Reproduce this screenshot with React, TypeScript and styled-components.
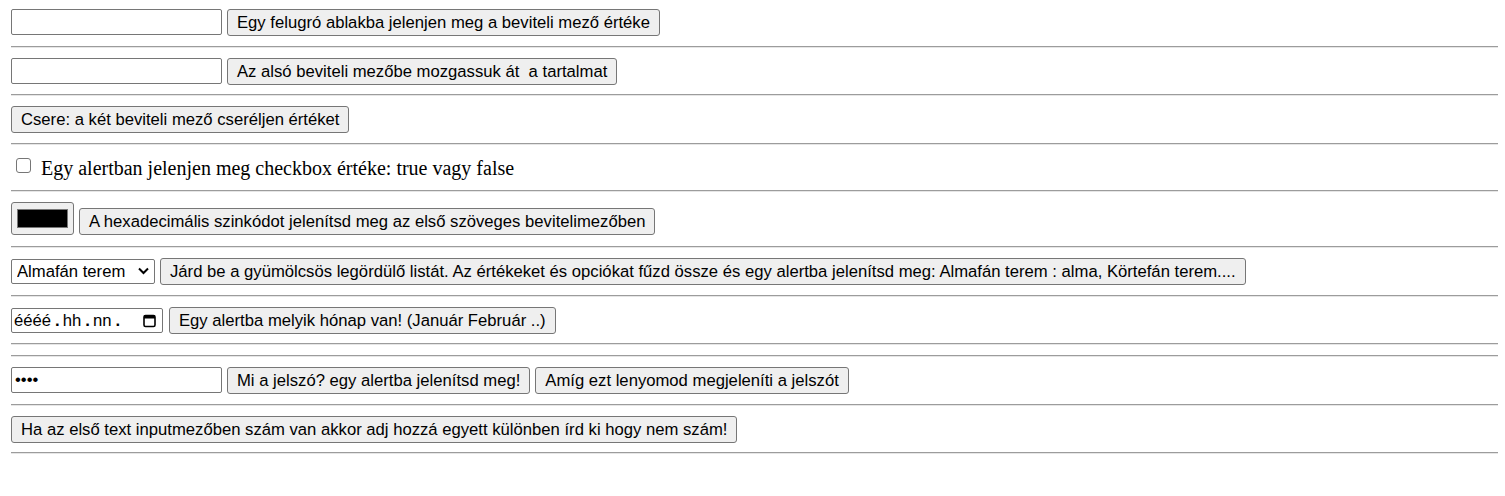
import React from "react";
import styled, { createGlobalStyle } from "styled-components";

const Global = createGlobalStyle`
  html, body { margin: 0; padding: 0; background: #ffffff; }
  body { font-family: "Liberation Serif", "Times New Roman", serif; color: #000; }
  * { box-sizing: border-box; }
`;

const Page = styled.div`
  padding: 0 7px 0 11px;
  display: flex;
  flex-direction: column;
`;

const Row = styled.div<{ $h: number; $pt: number; $gap?: number; $align?: string }>`
  height: ${(p) => p.$h}px;
  padding-top: ${(p) => p.$pt}px;
  display: flex;
  align-items: ${(p) => p.$align || "center"};
  gap: ${(p) => p.$gap ?? 5}px;
`;

const RowInner = styled.div<{ $align?: string; $gap?: number }>`
  display: flex;
  align-items: ${(p) => p.$align || "center"};
  gap: ${(p) => p.$gap ?? 5}px;
`;

const Divider = styled.hr`
  margin: 0;
  height: 2px;
  border: none;
  border-top: 1px solid #9c9c9c;
  border-bottom: 1px solid #e6e6e6;
`;

const Spacer = styled.div`
  height: 10px;
`;

const TextInput = styled.input`
  appearance: none;
  width: 211px;
  height: 26px;
  border: 1px solid #767676;
  border-radius: 2px;
  background: #fff;
  padding: 1px 3px;
  font-family: "Liberation Sans", Arial, sans-serif;
  font-size: 16.67px;
  color: #000;
  outline: none;
`;

const Button = styled.button`
  appearance: none;
  height: 27px;
  padding: 0 9px;
  border: 1px solid #767676;
  border-radius: 3px;
  background: #efefef;
  font-family: "Liberation Sans", Arial, sans-serif;
  font-size: 16.67px;
  line-height: 25px;
  color: #000;
  white-space: pre;
  cursor: default;
`;

const Check = styled.input`
  appearance: none;
  width: 15px;
  height: 15px;
  margin: 2px 10px 0 5px;
  border: 1px solid #767676;
  border-radius: 3px;
  background: #fff;
  flex: none;
`;

const CheckLabel = styled.label`
  display: flex;
  align-items: flex-start;
  font-family: "Liberation Serif", "Times New Roman", serif;
  font-size: 20px;
  line-height: 25px;
  color: #000;
`;

const ColorInput = styled.input`
  appearance: none;
  -webkit-appearance: none;
  width: 63px;
  height: 33px;
  border: 1px solid #767676;
  border-radius: 3px;
  background: #efefef;
  padding: 6px 5px;
  margin: 0;
  &::-webkit-color-swatch-wrapper { padding: 0; }
  &::-webkit-color-swatch { border: 1px solid #777; border-radius: 0; }
`;

const SelectWrap = styled.div`
  position: relative;
  display: flex;
`;

const Select = styled.select`
  appearance: none;
  -webkit-appearance: none;
  width: 144px;
  height: 25px;
  border: 1px solid #767676;
  border-radius: 2px;
  background: #fff;
  padding: 0 0 0 5px;
  font-family: "Liberation Sans", Arial, sans-serif;
  font-size: 16.67px;
  color: #000;
  outline: none;
`;

const Chevron = styled.svg`
  position: absolute;
  right: 6px;
  top: 8px;
  pointer-events: none;
`;

const DateField = styled.div`
  width: 152px;
  height: 25px;
  border: 1px solid #767676;
  border-radius: 2px;
  background: #fff;
  display: flex;
  align-items: center;
  padding: 0 6px 0 2px;
  font-family: "Liberation Sans", Arial, sans-serif;
  font-size: 16.67px;
  color: #000;
`;

const Seg = styled.span<{ $sep?: boolean }>`
  margin: ${(p) => (p.$sep ? "0 3px 0 4px" : "0")};
  font-weight: ${(p) => (p.$sep ? 700 : 400)};
`;

const CalIcon = styled.svg`
  margin-left: auto;
`;

export default function App() {
  return (
    <>
      <Global />
      <Page>
        <Row $h={46} $pt={9} $align="flex-start">
          <TextInput type="text" />
          <Button>Egy felugró ablakba jelenjen meg a beviteli mező értéke</Button>
        </Row>
        <Divider />
        <Row $h={46} $pt={10} $align="flex-start">
          <TextInput type="text" />
          <Button>{"Az alsó beviteli mezőbe mozgassuk át  a tartalmat"}</Button>
        </Row>
        <Divider />
        <Row $h={47} $pt={10} $align="flex-start">
          <Button>Csere: a két beviteli mező cseréljen értéket</Button>
        </Row>
        <Divider />
        <Row $h={45} $pt={11} $align="flex-start">
          <CheckLabel>
            <Check type="checkbox" />
            Egy alertban jelenjen meg checkbox értéke: true vagy false
          </CheckLabel>
        </Row>
        <Divider />
        <Row $h={54} $pt={10} $align="flex-start">
          <RowInner $align="flex-end">
            <ColorInput type="color" defaultValue="#000000" />
            <Button>A hexadecimális szinkódot jelenítsd meg az első szöveges bevitelimezőben</Button>
          </RowInner>
        </Row>
        <Divider />
        <Row $h={47} $pt={10} $align="flex-start">
          <RowInner>
            <SelectWrap>
              <Select defaultValue="alma">
                <option value="alma">Almafán terem</option>
                <option value="korte">Körtefán terem</option>
              </Select>
              <Chevron width="11" height="8" viewBox="0 0 11 8">
                <path d="M1 1.5 L5.5 6 L10 1.5" fill="none" stroke="#000" strokeWidth="2" />
              </Chevron>
            </SelectWrap>
            <Button>Járd be a gyümölcsös legördülő listát. Az értékeket és opciókat fűzd össze és egy alertba jelenítsd meg: Almafán terem : alma, Körtefán terem....</Button>
          </RowInner>
        </Row>
        <Divider />
        <Row $h={46} $pt={10} $align="flex-start" $gap={6}>
          <RowInner $gap={6}>
            <DateField>
              <Seg>éééé</Seg>
              <Seg $sep>.</Seg>
              <Seg>hh</Seg>
              <Seg $sep>.</Seg>
              <Seg>nn</Seg>
              <Seg $sep>.</Seg>
              <CalIcon width="13" height="14" viewBox="0 0 13 14">
                <rect x="1" y="1.5" width="11" height="11" rx="1.5" fill="none" stroke="#000" strokeWidth="1.6" />
                <rect x="1" y="1.5" width="11" height="3" fill="#000" />
              </CalIcon>
            </DateField>
            <Button>Egy alertba melyik hónap van! (Január Február ..)</Button>
          </RowInner>
        </Row>
        <Divider />
        <Spacer />
        <Divider />
        <Row $h={47} $pt={10} $align="flex-start">
          <TextInput type="password" defaultValue="1234" />
          <Button>Mi a jelszó? egy alertba jelenítsd meg!</Button>
          <Button>Amíg ezt lenyomod megjeleníti a jelszót</Button>
        </Row>
        <Divider />
        <Row $h={46} $pt={10} $align="flex-start">
          <Button>Ha az első text inputmezőben szám van akkor adj hozzá egyett különben írd ki hogy nem szám!</Button>
        </Row>
        <Divider />
      </Page>
    </>
  );
}
